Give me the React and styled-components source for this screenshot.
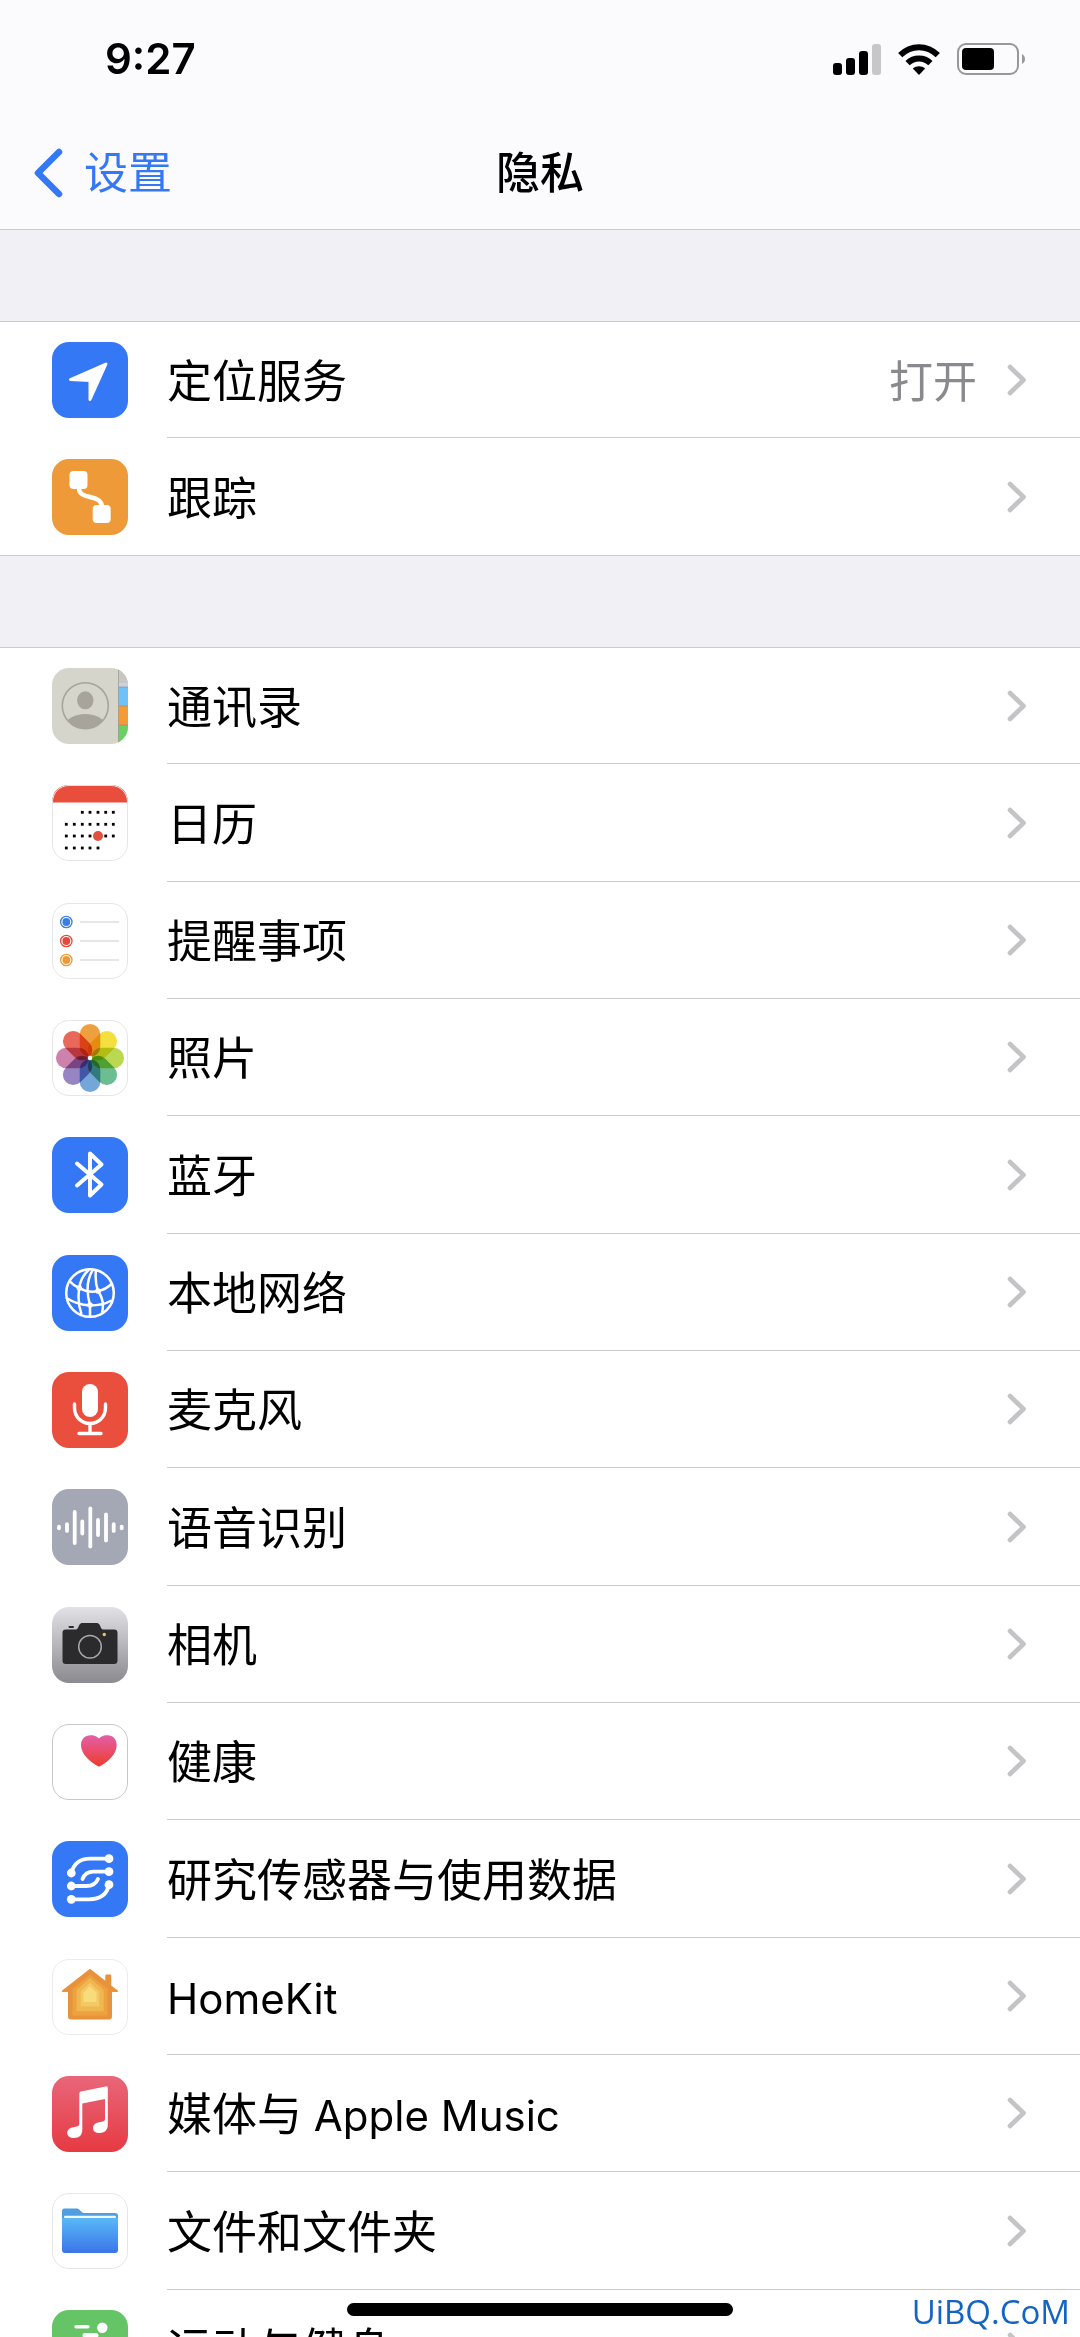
import styled, { createGlobalStyle } from 'styled-components';

const GlobalStyle = createGlobalStyle`
  * {
    box-sizing: border-box;
  }
  body {
    margin: 0;
    background: #f0f0f5;
    color: #000;
    font-family: Inter, 'Noto Sans CJK SC', sans-serif;
  }
`;

const Screen = styled.div`
  display: flex;
  flex-direction: column;
  height: 100vh;
  overflow: hidden;
`;

const Header = styled.header`
  flex: none;
  background: #fbfbfd;
  border-bottom: 1px solid #cbcbce;
`;

const StatusBar = styled.div`
  display: flex;
  align-items: center;
  justify-content: space-between;
  height: 118px;
  padding: 0 54px 0 105px;
`;

const Time = styled.time`
  font-size: 42px;
  font-weight: 600;
  line-height: 48px;
`;

const StatusIcons = styled.div`
  display: flex;
  align-items: center;
  gap: 17px;
`;

const NavBar = styled.nav`
  display: grid;
  grid-template-columns: 1fr auto 1fr;
  align-items: center;
  height: 111px;
  padding: 0 33px 2px;
`;

const BackLink = styled.a`
  display: flex;
  align-items: center;
  gap: 20px;
  color: #3478f6;
  font-size: 44px;
  line-height: 60px;
  text-decoration: none;
`;

const Title = styled.h1`
  margin: 0;
  font-size: 44px;
  font-weight: 500;
  line-height: 60px;
`;

const Content = styled.main`
  display: flex;
  flex-direction: column;
  gap: 91px;
  padding-top: 91px;
`;

const Group = styled.ul`
  margin: 0;
  padding: 0;
  list-style: none;
  background: #fff;
  border-top: 1px solid #cbcbce;
`;

const RowBody = styled.div`
  display: flex;
  flex: 1;
  align-items: center;
  gap: 30px;
  padding-right: 53px;
  border-bottom: 1px solid #cbcbce;
`;

const Row = styled.a`
  display: flex;
  height: 100%;
  padding-left: 52px;
  gap: 39px;
  color: inherit;
  text-decoration: none;
`;

// a row is 117 and a third tall, so every third one takes the spare pixel
const Item = styled.li`
  height: 117px;

  &:nth-child(3n + 2) {
    height: 118px;
  }
  &:first-child {
    height: 116px;
  }
  &:last-child {
    border-bottom: 1px solid #cbcbce;
  }
  &:last-child ${RowBody} {
    border-bottom: 0;
  }
`;

const AppIcon = styled.svg`
  flex: none;
  align-self: center;
  width: 76px;
  height: 76px;
`;

const Label = styled.span`
  flex: 1;
  padding-top: 4px;
  font-size: 45px;
  line-height: 60px;
`;

const Latin = styled.span`
  font-size: 42px;
`;

const Value = styled.span`
  padding-top: 4px;
  color: #8a8a8e;
  font-size: 44px;
  line-height: 60px;
`;

const HomeIndicator = styled.div`
  position: fixed;
  bottom: 21px;
  left: 50%;
  width: 386px;
  height: 13px;
  margin-left: -193px;
  border-radius: 7px;
  background: #000;
`;

const Watermark = styled.span`
  position: fixed;
  right: 10px;
  bottom: 5px;
  color: #1464c4;
  font-family: 'Open Sans', sans-serif;
  font-size: 33px;
  font-weight: 500;
  line-height: 40px;
  text-shadow: 0 0 2px #fff, 0 0 2px #fff;
`;

const SignalIcon = () => (
  <svg width="48" height="31" viewBox="0 0 48 31">
    <rect x="0" y="19" width="9" height="12" rx="3" />
    <rect x="13" y="14" width="9" height="17" rx="3" />
    <rect x="26" y="7" width="9" height="24" rx="3" />
    <rect x="39" y="0" width="9" height="31" rx="3" fill="#c7c7ca" />
  </svg>
);

const WifiIcon = () => (
  <svg width="42" height="31" viewBox="0 0 42 31">
    <g fill="none" stroke="#000" strokeWidth="6">
      <path d="M2.2 11.2C13 .6 29 .6 39.8 11.2" />
      <path d="M9.6 19.2C16 13 26 13 32.4 19.2" />
    </g>
    <path d="M21 31l-6.2-6.4c3.6-3.2 8.8-3.2 12.4 0z" />
  </svg>
);

const BatteryIcon = () => (
  <svg width="69" height="32" viewBox="0 0 69 32">
    <rect x="1" y="1" width="60" height="30" rx="8" fill="none" stroke="#98989b" strokeWidth="2" />
    <rect x="5" y="5" width="32" height="22" rx="4" />
    <path d="M65 11c4 2 4 8 0 10z" fill="#98989b" />
  </svg>
);

const BackChevron = () => (
  <svg width="31" height="50" viewBox="0 0 31 50">
    <path
      d="M26 4L5 25l21 21"
      fill="none"
      stroke="#3478f6"
      strokeWidth="6.5"
      strokeLinecap="round"
      strokeLinejoin="round"
    />
  </svg>
);

const Chevron = () => (
  <svg width="20" height="32" viewBox="0 0 20 32">
    <path
      d="M3 3l13.5 13L3 29"
      fill="none"
      stroke="#c4c4c6"
      strokeWidth="4.6"
      strokeLinecap="round"
      strokeLinejoin="round"
    />
  </svg>
);

const Tile = ({ fill = '#fff', outline, children }) => (
  <AppIcon viewBox="0 0 76 76" aria-hidden="true">
    <rect width="76" height="76" rx="17" fill={fill} />
    {children}
    {outline && (
      <rect x=".5" y=".5" width="75" height="75" rx="16.5" fill="none" stroke={outline} />
    )}
  </AppIcon>
);

const LocationIcon = () => (
  <Tile fill="#3478f6">
    <path
      d="M54 22L18.5 37.5l19.5 1V57.5z"
      fill="#fff"
      stroke="#fff"
      strokeWidth="3"
      strokeLinejoin="round"
    />
  </Tile>
);

const TrackingIcon = () => (
  <Tile fill="#ee9a38">
    <rect x="17.5" y="12" width="18" height="18" rx="4" fill="#fff" />
    <rect x="40.7" y="46" width="18" height="18" rx="4" fill="#fff" />
    <path d="M27 29c0 13 22.5 5 23 19" fill="none" stroke="#fff" strokeWidth="4.5" />
  </Tile>
);

const ContactsIcon = () => (
  <Tile fill="#d6d5cb">
    <clipPath id="tile">
      <rect width="76" height="76" rx="17" />
    </clipPath>
    <clipPath id="portrait">
      <circle cx="33.3" cy="37.7" r="23" />
    </clipPath>
    <g clipPath="url(#tile)">
      <path d="M66.5 0H76v19h-9.5z" fill="#c9c6c3" />
      <path d="M66.5 15H76v4h-9.5z" fill="#c4d3e6" />
      <path d="M66.5 19H76v19h-9.5z" fill="#6fc1f9" />
      <path d="M66.5 38H76v19h-9.5z" fill="#f59b35" />
      <path d="M66.5 57H76v19h-9.5z" fill="#6ad065" />
      <path d="M66.5 0v76M67 19h9M67 38h9M67 57h9" stroke="#8f8c84" strokeOpacity=".6" />
    </g>
    <ellipse cx="33.3" cy="32.3" rx="8.2" ry="9" fill="#a7a49c" />
    <ellipse cx="33.3" cy="58" rx="20" ry="12" fill="#a7a49c" clipPath="url(#portrait)" />
    <circle cx="33.3" cy="37.7" r="23" fill="none" stroke="#a7a49c" strokeWidth="1.6" />
  </Tile>
);

const dotCols = [14.3, 22.3, 30.3, 38, 46, 53.7, 61.3];
const dotRows = [
  { y: 27.3, from: 2, to: 6 },
  { y: 39.3, from: 0, to: 6 },
  { y: 51, from: 0, to: 6 },
  { y: 63, from: 0, to: 4 },
];

const CalendarIcon = () => (
  <Tile outline="#e6e6e8">
    {dotRows.map(({ y, from, to }) =>
      dotCols
        .slice(from, to + 1)
        .map((x) => <rect key={`${x}-${y}`} x={x - 1.4} y={y - 1.4} width="2.8" height="2.8" />)
    )}
    <circle cx="46" cy="51" r="5" fill="#e2503f" />
    <path d="M0 17.5C0 7 7 0 17 0h42c10 0 17 7 17 17.5z" fill="#e94e3d" />
  </Tile>
);

const RemindersIcon = () => (
  <Tile outline="#e6e6e8">
    {['#3b7de0', '#e4493c', '#eb9a3a'].map((color, i) => (
      <g key={color}>
        <circle cx="14.3" cy={19 + i * 19} r="5.7" fill="none" stroke={color} strokeWidth="1.3" />
        <circle cx="14.3" cy={19 + i * 19} r="3.9" fill={color} />
        <path d={`M28 ${19 + i * 19}h39`} stroke="#cdcdcf" />
      </g>
    ))}
  </Tile>
);

const petals = [
  '#efa03e',
  '#f3e03e',
  '#bbd852',
  '#6dbd92',
  '#74a6da',
  '#9685c2',
  '#cd81ad',
  '#e8695a',
];

const PhotosIcon = () => (
  <Tile outline="#e6e6e8">
    <g style={{ isolation: 'isolate' }}>
      {petals.map((color, i) => (
        <rect
          key={color}
          x="27.7"
          y="4"
          width="20.6"
          height="33"
          rx="10.3"
          fill={color}
          transform={`rotate(${i * 45} 38 38)`}
          style={{ mixBlendMode: 'multiply' }}
        />
      ))}
    </g>
    <circle cx="38" cy="38" r="2.2" fill="#fff" />
  </Tile>
);

const BluetoothIcon = () => (
  <Tile fill="#3478f6">
    <path
      d="M25 26.5l24.5 21L38 58.5v-42l11.5 11L25 48.5"
      fill="none"
      stroke="#fff"
      strokeWidth="4"
      strokeLinecap="round"
      strokeLinejoin="round"
    />
  </Tile>
);

const NetworkIcon = () => (
  <Tile fill="#3478f6">
    <g fill="none" stroke="#fff" strokeWidth="2.5">
      <circle cx="38" cy="38" r="23.8" />
      <path d="M37 14.5C31 20 28 26 27.3 33c-1.500 9-.8 18 2.200 26" />
      <path d="M41 14.5C35 24 34 36 38 50v11.500" />
      <path d="M44 15c-1 8 0 15 2 21 5 7 6 14 4 22" />
      <path d="M17.5 26c3 3.500 6 5.500 9.800 7 6 3.500 12.500 4.500 18.700 3 5.500-1 10-3.500 14-7.500" />
      <path d="M14.5 43c7 4.500 14.500 7 23.500 7.500 8.500 0 15.500-1.500 21.500-5" />
    </g>
    <g fill="#fff">
      <circle cx="27.3" cy="33" r="2.8" />
      <circle cx="46" cy="36" r="2.8" />
      <circle cx="38" cy="50" r="2.8" />
    </g>
  </Tile>
);

const MicrophoneIcon = () => (
  <Tile fill="#ea4f3d">
    <rect x="30" y="12" width="16" height="33" rx="8" fill="#fff" />
    <path
      d="M22.5 32v4a15.5 15.5 0 0 0 31 0v-4M38 52v9M27 61.5h22"
      fill="none"
      stroke="#fff"
      strokeWidth="3.4"
      strokeLinecap="round"
    />
  </Tile>
);

const waveBars = [
  [7, 2.7],
  [15, 5.3],
  [22.7, 17.5],
  [30.3, 8],
  [38.3, 21],
  [46, 9.5],
  [54, 15],
  [61.7, 5.3],
  [69.7, 2.7],
];

const SpeechIcon = () => (
  <Tile fill="#a4a8b4">
    {waveBars.map(([x, half]) => (
      <rect key={x} x={x - 1.9} y={38.5 - half} width="3.8" height={half * 2} rx="1.9" fill="#fff" />
    ))}
  </Tile>
);

const CameraIcon = () => (
  <Tile fill="url(#steel)">
    <linearGradient id="steel" x1="0" y1="0" x2="0" y2="1">
      <stop offset="0" stopColor="#e2e1e6" />
      <stop offset="1" stopColor="#8b8a8f" />
    </linearGradient>
    <path
      d="M14 22.5h9c3 0 3-2 4-4s2-2.5 4-2.5h13c2 0 3 .5 4 2.5s1 4 4 4h10c2.5 0 3.5 1 3.5 3.5v27.5c0 2.5-1 3.5-3.5 3.5H14c-2.5 0-3.5-1-3.5-3.5V26c0-2.5 1-3.5 3.5-3.5z"
      fill="#2b2b2d"
    />
    <rect x="16.5" y="19" width="5.5" height="2" rx="1" fill="#2b2b2d" />
    <circle cx="38" cy="39.7" r="11.3" fill="none" stroke="#a9a9ab" strokeWidth="1.5" />
    <circle cx="52.3" cy="27.5" r="1.7" fill="#f0c060" />
  </Tile>
);

const HealthIcon = () => (
  <Tile outline="#c6c9c9">
    <linearGradient id="heart" x1="0" y1="0" x2="0" y2="1">
      <stop offset="0" stopColor="#e25fa8" />
      <stop offset="1" stopColor="#ef3c2c" />
    </linearGradient>
    <path
      d="M47 14.5c3-3 6-3.2 8.5-3.2 5.5 0 9.2 4 9.2 9.7 0 9-8 16.5-17.7 21.8C37.5 37.5 29 30 29 21c0-5.7 4-9.7 9.5-9.7 2.5 0 5.5.2 8.5 3.2z"
      fill="url(#heart)"
    />
  </Tile>
);

const SensorIcon = () => (
  <Tile fill="#3478f6">
    <g fill="none" stroke="#fff" strokeWidth="3.8" strokeLinecap="round">
      <path d="M19.3 32C22 22 28 17.7 38 17.7h19" />
      <path d="M30.5 38c2-5 5-7.3 11-7.3H57" />
      <path d="M19.3 45H34c6 0 10-2 12-7" />
      <path d="M19.3 58.3H37c10 0 18-4.3 20-14.6" />
    </g>
    <g fill="#fff">
      <circle cx="57" cy="17.7" r="4.4" />
      <circle cx="57" cy="30.7" r="4.4" />
      <circle cx="57" cy="43.7" r="4.4" />
      <circle cx="19.3" cy="32" r="4.4" />
      <circle cx="19.3" cy="45" r="4.4" />
      <circle cx="19.3" cy="58.3" r="4.4" />
    </g>
  </Tile>
);

const HomeKitIcon = () => (
  <Tile outline="#ececee">
    <path
      d="M38 9.7l15.3 12V16.5q0-1 1-1h4q1 0 1 1v10l7 5.5-1 1H60v24.5q0 3-3 3H19q-3 0-3-3V33h-5.5l-1-1z"
      fill="#e8923c"
    />
    <path d="M38 15.5l17.5 14.5v26.5h-35V30z" fill="#eda13f" />
    <path d="M38 19l13.7 12v21.3H24.5V31z" fill="#f0b651" />
    <path d="M38 23.5l9.3 9v15H28.7v-15z" fill="#f4c962" />
    <path d="M38 27.5l6.5 6v9.5h-13v-9.5z" fill="#f8dc7c" />
  </Tile>
);

const MusicIcon = () => (
  <Tile fill="url(#music)">
    <linearGradient id="music" x1="0" y1="0" x2="0" y2="1">
      <stop offset="0" stopColor="#e9667a" />
      <stop offset="1" stopColor="#e63a42" />
    </linearGradient>
    <path
      d="M27.3 17.5q0-1.5 1.5-1.9l25-5.2q2-.3 2 1.5V49c0 5-3.3 8-8.3 8-4 0-6.5-2-6.5-5s2.5-5.3 6-5.8c4-.6 6-1 6-3.4V23l-22.7 4.5V54c0 5-3 8-8.3 8-4 0-6.8-2-6.8-5s2.5-5.3 6-5.8c4-.6 6.1-1 6.100-3.400z"
      fill="#fff"
    />
  </Tile>
);

const FilesIcon = () => (
  <Tile outline="#e6e6e8">
    <linearGradient id="folder" x1="0" y1="0" x2="0" y2="1">
      <stop offset="0" stopColor="#59b9f6" />
      <stop offset="1" stopColor="#3b74e8" />
    </linearGradient>
    <path d="M10 18q0-2.5 2.5-2.5H25c3 0 4 4.5 7 4.5h31q3 0 3 3v8H10z" fill="#4f9fe0" />
    <path d="M10 25h56v32q0 3-3 3H13q-3 0-3-3z" fill="url(#folder)" />
    <rect x="12" y="22.7" width="52" height="2.2" rx="1" fill="#eef7fd" />
  </Tile>
);

const FitnessIcon = () => (
  <Tile fill="#64c466">
    <g fill="none" stroke="#fff" strokeLinecap="round" strokeLinejoin="round">
      <path d="M24 16.8h12M16 30h8" strokeWidth="3.4" />
      <path d="M33 25.5h11l-7 15 10 8-4 14M37 41l-7 10H18" strokeWidth="5" />
    </g>
    <circle cx="50.3" cy="17.8" r="5.2" fill="#fff" />
  </Tile>
);

const groups = [
  [
    { icon: LocationIcon, label: '定位服务', value: '打开' },
    { icon: TrackingIcon, label: '跟踪' },
  ],
  [
    { icon: ContactsIcon, label: '通讯录' },
    { icon: CalendarIcon, label: '日历' },
    { icon: RemindersIcon, label: '提醒事项' },
    { icon: PhotosIcon, label: '照片' },
    { icon: BluetoothIcon, label: '蓝牙' },
    { icon: NetworkIcon, label: '本地网络' },
    { icon: MicrophoneIcon, label: '麦克风' },
    { icon: SpeechIcon, label: '语音识别' },
    { icon: CameraIcon, label: '相机' },
    { icon: HealthIcon, label: '健康' },
    { icon: SensorIcon, label: '研究传感器与使用数据' },
    { icon: HomeKitIcon, latin: 'HomeKit' },
    { icon: MusicIcon, label: '媒体与', latin: ' Apple Music' },
    { icon: FilesIcon, label: '文件和文件夹' },
    { icon: FitnessIcon, label: '运动与健身' },
  ],
];

const SettingsRow = ({ icon: Icon, label, latin, value }) => (
  <Item>
    <Row href="#">
      <Icon />
      <RowBody>
        <Label>
          {label}
          {latin && <Latin>{latin}</Latin>}
        </Label>
        {value && <Value>{value}</Value>}
        <Chevron />
      </RowBody>
    </Row>
  </Item>
);

const App = () => (
  <>
    <GlobalStyle />
    <Screen lang="zh-CN">
      <Header>
        <StatusBar>
          <Time>9:27</Time>
          <StatusIcons>
            <SignalIcon />
            <WifiIcon />
            <BatteryIcon />
          </StatusIcons>
        </StatusBar>
        <NavBar>
          <BackLink href="#">
            <BackChevron />
            设置
          </BackLink>
          <Title>隐私</Title>
        </NavBar>
      </Header>
      <Content>
        {groups.map((rows, i) => (
          <Group key={i}>
            {rows.map((row) => (
              <SettingsRow key={row.label || row.latin} {...row} />
            ))}
          </Group>
        ))}
      </Content>
    </Screen>
    <HomeIndicator />
    <Watermark>UiBQ.CoM</Watermark>
  </>
);

export default App;
